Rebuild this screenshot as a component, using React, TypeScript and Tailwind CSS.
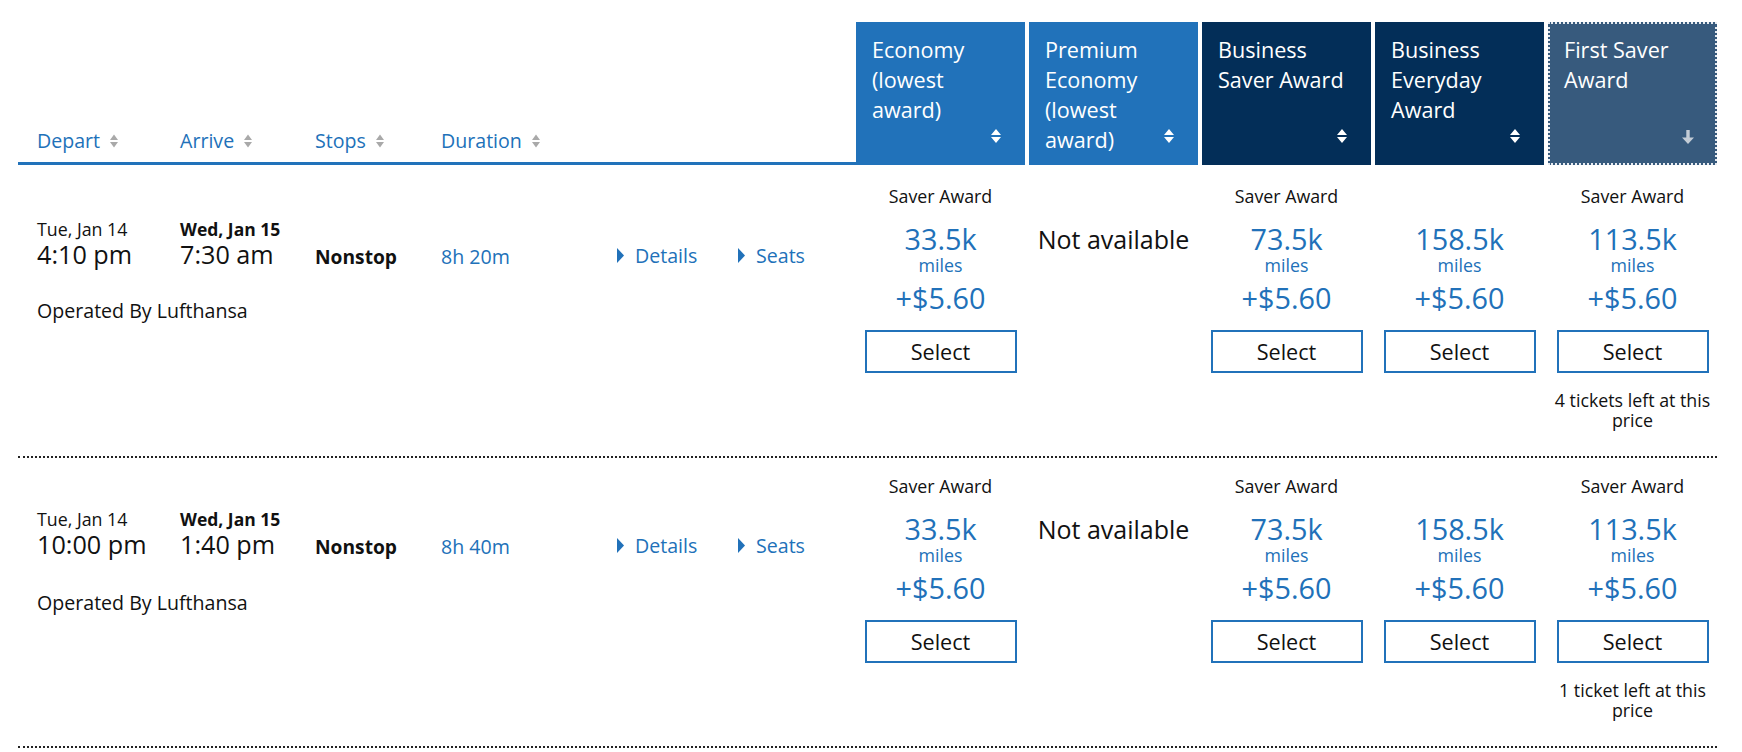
import React from "react";

type Fare = {
  label?: string;
  miles?: string;
  note?: string;
};

type Flight = {
  departDate: string;
  departTime: string;
  arriveDate: string;
  arriveTime: string;
  duration: string;
  fares: Fare[];
};

const flights: Flight[] = [
  {
    departDate: "Tue, Jan 14",
    departTime: "4:10 pm",
    arriveDate: "Wed, Jan 15",
    arriveTime: "7:30 am",
    duration: "8h 20m",
    fares: [
      { label: "Saver Award", miles: "33.5k" },
      {},
      { label: "Saver Award", miles: "73.5k" },
      { miles: "158.5k" },
      { label: "Saver Award", miles: "113.5k", note: "4 tickets left at this price" },
    ],
  },
  {
    departDate: "Tue, Jan 14",
    departTime: "10:00 pm",
    arriveDate: "Wed, Jan 15",
    arriveTime: "1:40 pm",
    duration: "8h 40m",
    fares: [
      { label: "Saver Award", miles: "33.5k" },
      {},
      { label: "Saver Award", miles: "73.5k" },
      { miles: "158.5k" },
      { label: "Saver Award", miles: "113.5k", note: "1 ticket left at this price" },
    ],
  },
];

// up/down sort arrows used in the column headers
const SortIcon = ({ className }: { className?: string }) => (
  <svg width="10" height="14" viewBox="0 0 10 14" className={className}>
    <path d="M5 0L10 6H0Z M5 14L0 8H10Z" fill="currentColor" />
  </svg>
);

const SmallSortIcon = () => (
  <svg width="8" height="14" viewBox="0 0 8 14" className="ml-[10px] text-[#a9a9a9]">
    <path d="M4 0.5L8 6H0Z M4 13.5L0 8H8Z" fill="currentColor" />
  </svg>
);

const DownArrow = () => (
  <svg width="12" height="14" viewBox="0 0 12 14">
    <path d="M4.3 0h3.4v7.5H12L6 14L0 7.5h4.3z" fill="currentColor" />
  </svg>
);

const Caret = () => (
  <svg width="7" height="15" viewBox="0 0 7 15" className="shrink-0">
    <path d="M0 0L7 7.5L0 15Z" fill="#2171b9" />
  </svg>
);

const HeaderLabel = ({ text, width }: { text: string; width: string }) => (
  <div className={`flex items-center ${width}`}>
    <span className="text-[19.6px] leading-[24px] text-[#2171b9]">{text}</span>
    <SmallSortIcon />
  </div>
);

const CabinBox = ({ title, tone }: { title: string; tone: "light" | "navy" | "first" }) => {
  if (tone === "first") {
    return (
      <div className="relative w-[169px] h-[143px] bg-[#375a7d] border-2 border-dotted border-[#e8ecf1] pt-[11px] px-[14px] text-white text-[21.6px] leading-[30px]">
        {title}
        <div className="absolute right-[21px] bottom-[19px] text-[#c3ccd6]">
          <DownArrow />
        </div>
      </div>
    );
  }
  return (
    <div
      className={`relative w-[169px] h-[143px] pt-[13px] px-[16px] text-white text-[21.6px] leading-[30px] ${
        tone === "light" ? "bg-[#2172ba]" : "bg-[#032e58]"
      }`}
    >
      {title}
      <SortIcon className="absolute right-[24px] bottom-[22px] text-white" />
    </div>
  );
};

const FareCell = ({ fare }: { fare: Fare }) => (
  <div className="w-[169px] flex flex-col items-center text-center">
    <div className="h-[24px] text-[17.8px] leading-[24px] text-[#111]">{fare.label ?? ""}</div>
    {fare.miles ? (
      <>
        <div className="mt-[15px] text-[28.8px] leading-[32px] text-[#2171b9]">{fare.miles}</div>
        <div className="text-[17.8px] leading-[20px] text-[#2171b9]">miles</div>
        <div className="mt-[7px] text-[28.8px] leading-[32px] text-[#2171b9]">+$5.60</div>
        <button className="mt-[16px] w-[152px] h-[43px] border-2 border-[#2172ba] bg-white text-[21.6px] leading-none text-[#111]">
          Select
        </button>
        {fare.note && (
          <div className="mt-[17px] text-[17.8px] leading-[20px] text-[#111]">{fare.note}</div>
        )}
      </>
    ) : (
      <div className="mt-[15px] text-[25px] leading-[32px] text-[#111]">Not available</div>
    )}
  </div>
);

const FlightRow = ({ flight, first }: { flight: Flight; first: boolean }) => (
  <div className={`flex border-b-2 border-dotted border-[#222] pb-[26px] ${first ? "pt-[19px]" : "pt-[16px]"}`}>
    <div className="w-[838px] pt-[35px] pl-[19px] text-[#111]">
      <div className="flex">
        <div className="w-[143px]">
          <div className="text-[17.8px] leading-[20px]">{flight.departDate}</div>
          <div className="text-[25.2px] leading-[30px]">{flight.departTime}</div>
        </div>
        <div className="w-[135px]">
          <div className="text-[17.5px] leading-[20px] font-bold">{flight.arriveDate}</div>
          <div className="text-[25.2px] leading-[30px]">{flight.arriveTime}</div>
        </div>
        <div className="w-[126px] pt-[26px] text-[19.2px] leading-[24px] font-bold">Nonstop</div>
        <div className="w-[176px] pt-[26px] text-[19.6px] leading-[24px] text-[#2171b9]">{flight.duration}</div>
        <div className="w-[121px] pt-[23px] flex items-center gap-[11px] text-[19.6px] leading-[24px] text-[#2171b9]">
          <Caret />
          Details
        </div>
        <div className="pt-[23px] flex items-center gap-[11px] text-[19.6px] leading-[24px] text-[#2171b9]">
          <Caret />
          Seats
        </div>
      </div>
      <div className={`${first ? "mt-[30px]" : "mt-[32px]"} text-[19.6px] leading-[24px]`}>Operated By Lufthansa</div>
    </div>
    <div className="flex gap-[4px]">
      {flight.fares.map((fare, i) => (
        <FareCell key={i} fare={fare} />
      ))}
    </div>
  </div>
);

export default function App() {
  return (
    <div className="min-h-screen bg-white pt-[22px] pl-[18px] font-['Open_Sans',sans-serif]">
      <div className="w-[1699px]">
        <div className="flex items-end">
          <div className="w-[838px] h-[143px] flex items-end border-b-[3px] border-[#2172ba]">
            <div className="flex pl-[19px] pb-[9px]">
              <HeaderLabel text="Depart" width="w-[143px]" />
              <HeaderLabel text="Arrive" width="w-[135px]" />
              <HeaderLabel text="Stops" width="w-[126px]" />
              <HeaderLabel text="Duration" width="w-[176px]" />
            </div>
          </div>
          <div className="flex gap-[4px]">
            <CabinBox title="Economy (lowest award)" tone="light" />
            <CabinBox title="Premium Economy (lowest award)" tone="light" />
            <CabinBox title="Business Saver Award" tone="navy" />
            <CabinBox title="Business Everyday Award" tone="navy" />
            <CabinBox title="First Saver Award" tone="first" />
          </div>
        </div>
        {flights.map((f, i) => (
          <FlightRow key={i} flight={f} first={i === 0} />
        ))}
      </div>
    </div>
  );
}
